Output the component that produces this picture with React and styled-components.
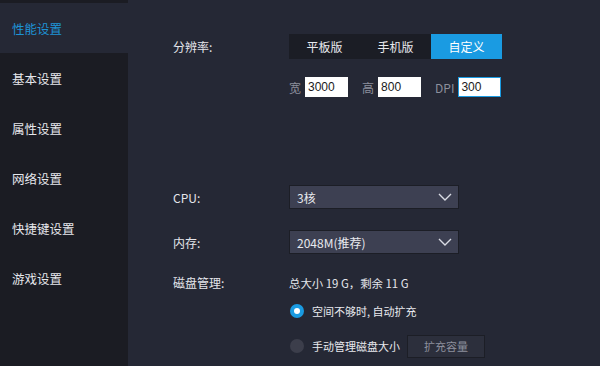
import React from 'react';
import styled, { createGlobalStyle } from 'styled-components';

const GlobalStyle = createGlobalStyle`
  html, body {
    margin: 0;
    padding: 0;
    background: #252835;
  }
  body {
    font-family: "Noto Sans CJK SC", "Liberation Sans", sans-serif;
  }
`;

const menu = ['性能设置', '基本设置', '属性设置', '网络设置', '快捷键设置', '游戏设置'];

function Chevron() {
  return (
    <svg width="14" height="8" viewBox="0 0 14 8" fill="none">
      <path d="M1 1l6 6 6-6" stroke="#d9dbe4" strokeWidth="1.4" />
    </svg>
  );
}

export default function App() {
  return (
    <Page>
      <GlobalStyle />
      <Sidebar>
        {menu.map((m, i) => (
          <MenuItem key={m} active={i === 0}>{m}</MenuItem>
        ))}
      </Sidebar>
      <Main>
        <Row style={{ marginTop: 34 }}>
          <Label>分辨率:</Label>
          <Tabs>
            <Tab>平板版</Tab>
            <Tab>手机版</Tab>
            <Tab active>自定义</Tab>
          </Tabs>
        </Row>
        <SizeRow>
          <SizeLabel>宽</SizeLabel>
          <SizeInput defaultValue="3000" />
          <SizeLabel>高</SizeLabel>
          <SizeInput defaultValue="800" />
          <SizeLabel>DPI</SizeLabel>
          <SizeInput defaultValue="300" focused />
        </SizeRow>
        <Row style={{ marginTop: 88 }}>
          <Label>CPU:</Label>
          <Select>
            <span>3核</span>
            <Chevron />
          </Select>
        </Row>
        <Row style={{ marginTop: 21 }}>
          <Label>内存:</Label>
          <Select>
            <span>2048M(推荐)</span>
            <Chevron />
          </Select>
        </Row>
        <Row style={{ marginTop: 20 }}>
          <Label>磁盘管理:</Label>
          <Info>总大小 19 G，剩余 11 G</Info>
        </Row>
        <RadioRow style={{ marginTop: 8 }}>
          <Radio checked />
          <RadioText>空间不够时, 自动扩充</RadioText>
        </RadioRow>
        <RadioRow style={{ marginTop: 11 }}>
          <Radio />
          <RadioText>手动管理磁盘大小</RadioText>
          <ExpandButton>扩充容量</ExpandButton>
        </RadioRow>
      </Main>
    </Page>
  );
}

const Page = styled.div`
  display: flex;
  width: 600px;
  height: 366px;
  overflow: hidden;
  background: #252835;
`;

const Sidebar = styled.nav`
  width: 128px;
  flex-shrink: 0;
  background: #1b1c23;
  padding-top: 3px;
  box-sizing: border-box;
`;

const MenuItem = styled.div`
  height: 50px;
  display: flex;
  align-items: center;
  padding-left: 12px;
  font-size: 12.5px;
  color: ${p => (p.active ? '#1e93d6' : '#e6e7ec')};
  background: ${p => (p.active ? '#252835' : 'transparent')};
`;

const Main = styled.main`
  flex: 1;
  padding-left: 45px;
  display: flex;
  flex-direction: column;
`;

const Row = styled.div`
  display: flex;
  align-items: center;
`;

const Label = styled.div`
  width: 116px;
  font-size: 12px;
  color: #e4e5eb;
`;

const Tabs = styled.div`
  display: flex;
  height: 25px;
  background: #1b1d25;
`;

const Tab = styled.div`
  width: 71px;
  display: flex;
  align-items: center;
  justify-content: center;
  font-size: 12px;
  color: ${p => (p.active ? '#ffffff' : '#e8e9ee')};
  background: ${p => (p.active ? '#1a9be2' : 'transparent')};
`;

const SizeRow = styled.div`
  display: flex;
  align-items: center;
  margin-top: 18px;
  margin-left: 116px;
`;

const SizeLabel = styled.span`
  font-size: 12px;
  color: #8c8f9c;
  margin-right: 4px;
  margin-left: 14px;
  &:first-child {
    margin-left: 0;
  }
`;

const SizeInput = styled.input`
  width: 43px;
  height: 20px;
  box-sizing: border-box;
  border: 1px solid ${p => (p.focused ? '#1a9be2' : '#ffffff')};
  background: #ffffff;
  padding: 0 2px;
  font-family: "Liberation Sans", sans-serif;
  font-size: 12px;
  color: #1a1a1a;
  outline: none;
`;

const Select = styled.div`
  width: 170px;
  height: 24px;
  box-sizing: border-box;
  background: #3d4052;
  border: 1px solid #1c1e26;
  display: flex;
  align-items: center;
  justify-content: space-between;
  padding: 0 6px 0 7px;
  font-size: 12px;
  color: #e8e9ee;
`;

const Info = styled.div`
  font-size: 11.4px;
  color: #e4e5eb;
`;

const RadioRow = styled.div`
  display: flex;
  align-items: center;
  margin-left: 117px;
  height: 24px;
`;

const Radio = styled.span`
  width: 14px;
  height: 14px;
  border-radius: 50%;
  box-sizing: border-box;
  margin-right: 8px;
  background: ${p => (p.checked ? '#1a9be2' : '#3c3e4b')};
  position: relative;
  &::after {
    content: '';
    display: ${p => (p.checked ? 'block' : 'none')};
    position: absolute;
    left: 4px;
    top: 4px;
    width: 6px;
    height: 6px;
    border-radius: 50%;
    background: #ffffff;
  }
`;

const RadioText = styled.span`
  font-size: 11px;
  color: #e8e9ee;
`;

const ExpandButton = styled.div`
  margin-left: 7px;
  width: 78px;
  height: 23px;
  box-sizing: border-box;
  border: 1px solid #1c1e26;
  background: #2c2f3c;
  display: flex;
  align-items: center;
  justify-content: center;
  font-size: 11px;
  color: #8c8f9c;
`;
